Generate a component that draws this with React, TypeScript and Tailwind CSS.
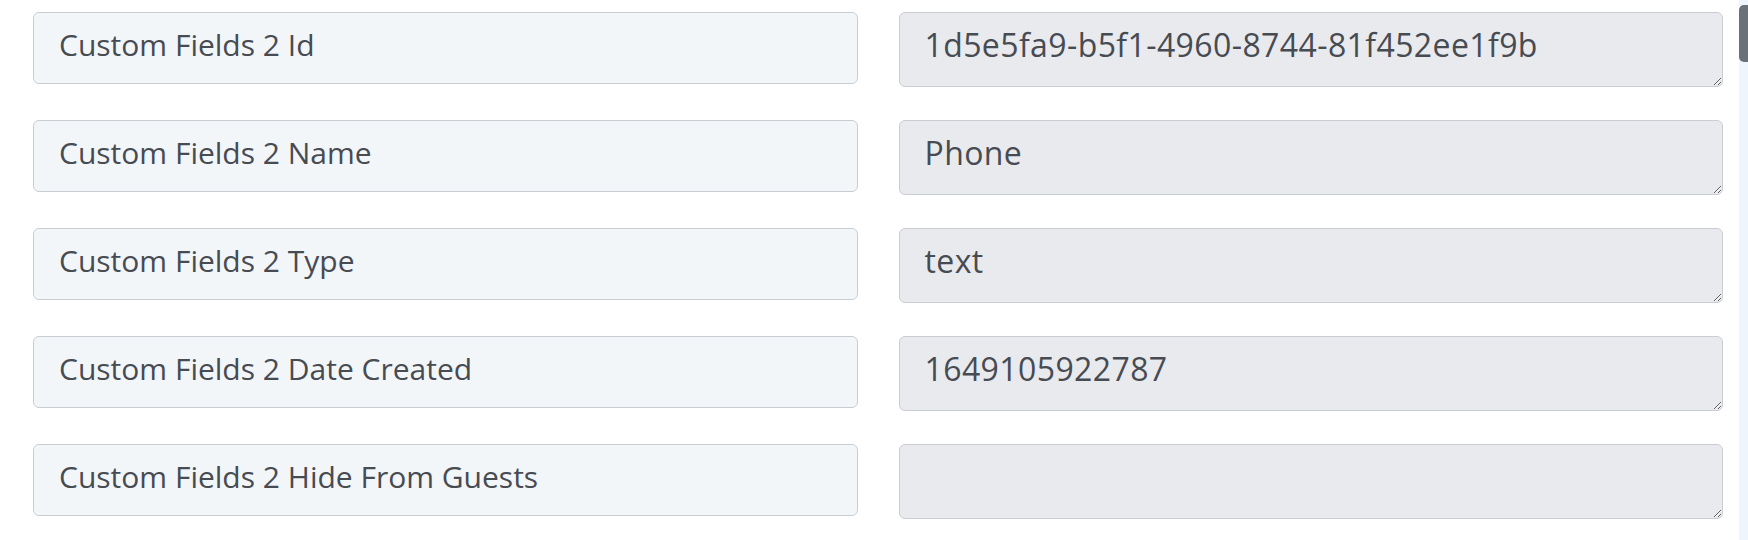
import React from 'react';

interface FieldRow {
  label: string;
  value: string;
}

const rows: FieldRow[] = [
  { label: 'Custom Fields 2 Id', value: '1d5e5fa9-b5f1-4960-8744-81f452ee1f9b' },
  { label: 'Custom Fields 2 Name', value: 'Phone' },
  { label: 'Custom Fields 2 Type', value: 'text' },
  { label: 'Custom Fields 2 Date Created', value: '1649105922787' },
  { label: 'Custom Fields 2 Hide From Guests', value: '' },
];

export default function App() {
  return (
    <div className="flex h-[540px] w-full overflow-hidden bg-white font-['Open_Sans',sans-serif] text-[#474b52]">
      <div className="flex-1 pl-[33px] pr-[16px] pt-[12px]">
        <div className="grid grid-cols-2 items-start gap-x-[41px] gap-y-[33px]">
          {rows.map((row) => (
            <React.Fragment key={row.label}>
              <div className="h-[72px] rounded-[6px] border border-[#c9cdd2] bg-[#f3f6f9] pl-[25px] pt-[14px] text-[30px] leading-[36px]">
                {row.label}
              </div>
              <textarea
                readOnly
                value={row.value}
                className="block h-[75px] w-full rounded-[6px] border border-[#c9cdd2] bg-[#e9eaee] pl-[25px] pt-[14px] text-[32px] leading-[36px] tracking-[0.4px] text-[#474b52] outline-none"
              />
            </React.Fragment>
          ))}
        </div>
      </div>
      <div className="relative w-[9px] bg-[#eff5fd]">
        <div className="absolute left-0 top-[5px] h-[57px] w-[9px] rounded-l-[5px] bg-[#6b7178]" />
      </div>
    </div>
  );
}
